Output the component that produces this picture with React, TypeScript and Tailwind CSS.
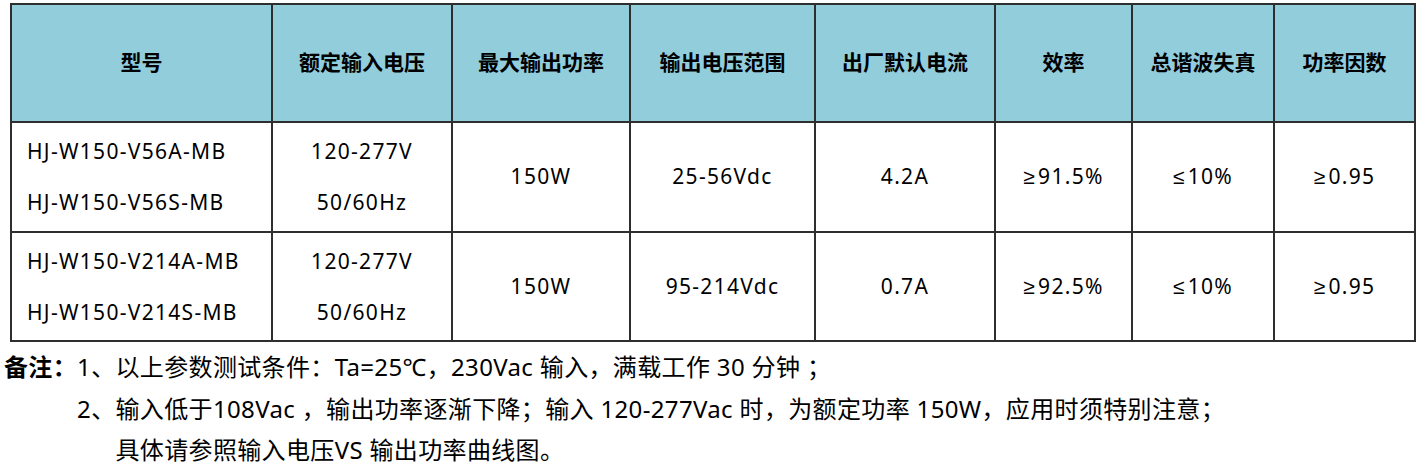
import React from 'react';

const headers = ['型号', '额定输入电压', '最大输出功率', '输出电压范围', '出厂默认电流', '效率', '总谐波失真', '功率因数'];
const widths = [261, 180, 178, 185, 180, 137, 142, 141];

const rows = [
  {
    models: ['HJ-W150-V56A-MB', 'HJ-W150-V56S-MB'],
    power: '150W',
    range: '25-56Vdc',
    current: '4.2A',
    eff: '91.5%',
  },
  {
    models: ['HJ-W150-V214A-MB', 'HJ-W150-V214S-MB'],
    power: '150W',
    range: '95-214Vdc',
    current: '0.7A',
    eff: '92.5%',
  },
];

const cell = 'border-2 border-[#2e2e2e] text-center align-middle p-0';

// the CJK font draws ≥ / ≤ slanted; the reference has the plain Latin form
const Sym = ({ c }: { c: string }) => <span className="font-['Liberation_Sans',sans-serif] mr-[2px]">{c}</span>;

export default function App() {
  return (
    <div className="w-[1418px] h-[473px] bg-white text-black font-['Noto_Sans','Noto_Sans_CJK_SC',sans-serif] pt-[3px] pl-[10px]">
      <table className="table-fixed border-collapse w-[1404px]">
        <colgroup>
          {widths.map((w, i) => (
            <col key={i} style={{ width: w }} />
          ))}
        </colgroup>
        <thead>
          <tr className="h-[118px] bg-[#92cddc]">
            {headers.map((h) => (
              <th key={h} className={`${cell} text-[21px] font-bold`}>
                {h}
              </th>
            ))}
          </tr>
        </thead>
        <tbody className="text-[21px]">
          {rows.map((r, i) => (
            <tr key={i} className={i === 0 ? 'h-[110px]' : 'h-[109px]'}>
              <td className={`${cell} !text-left pl-[15px] leading-[51px] tracking-[1.3px]`}>
                {r.models[0]}
                <br />
                {r.models[1]}
              </td>
              <td className={`${cell} leading-[51px] tracking-[1.3px]`}>
                120-277V
                <br />
                50/60Hz
              </td>
              <td className={`${cell} tracking-[1.3px]`}>{r.power}</td>
              <td className={`${cell} tracking-[1.3px]`}>{r.range}</td>
              <td className={`${cell} tracking-[1.3px]`}>{r.current}</td>
              <td className={`${cell} tracking-[1.3px]`}>
                <Sym c="≥" />
                {r.eff}
              </td>
              <td className={`${cell} tracking-[1.3px]`}>
                <Sym c="≤" />
                10%
              </td>
              <td className={`${cell} tracking-[1.3px]`}>
                <Sym c="≥" />
                0.95
              </td>
            </tr>
          ))}
        </tbody>
      </table>

      <div className="flex -ml-[6px] mt-[4px] text-[24px] leading-[41.5px] tracking-[0.35px]">
        <div className="shrink-0 font-bold">备注：</div>
        <div className="flex flex-col">
          <div>1、以上参数测试条件：Ta=25℃，230Vac 输入，满载工作 30 分钟 ；</div>
          <div className="flex">
            <span className="shrink-0">2、</span>
            <span>
              输入低于108Vac ，输出功率逐渐下降；输入 120-277Vac 时，为额定功率 150W，应用时须特别注意；
              <br />
              具体请参照输入电压VS 输出功率曲线图。
            </span>
          </div>
        </div>
      </div>
    </div>
  );
}
